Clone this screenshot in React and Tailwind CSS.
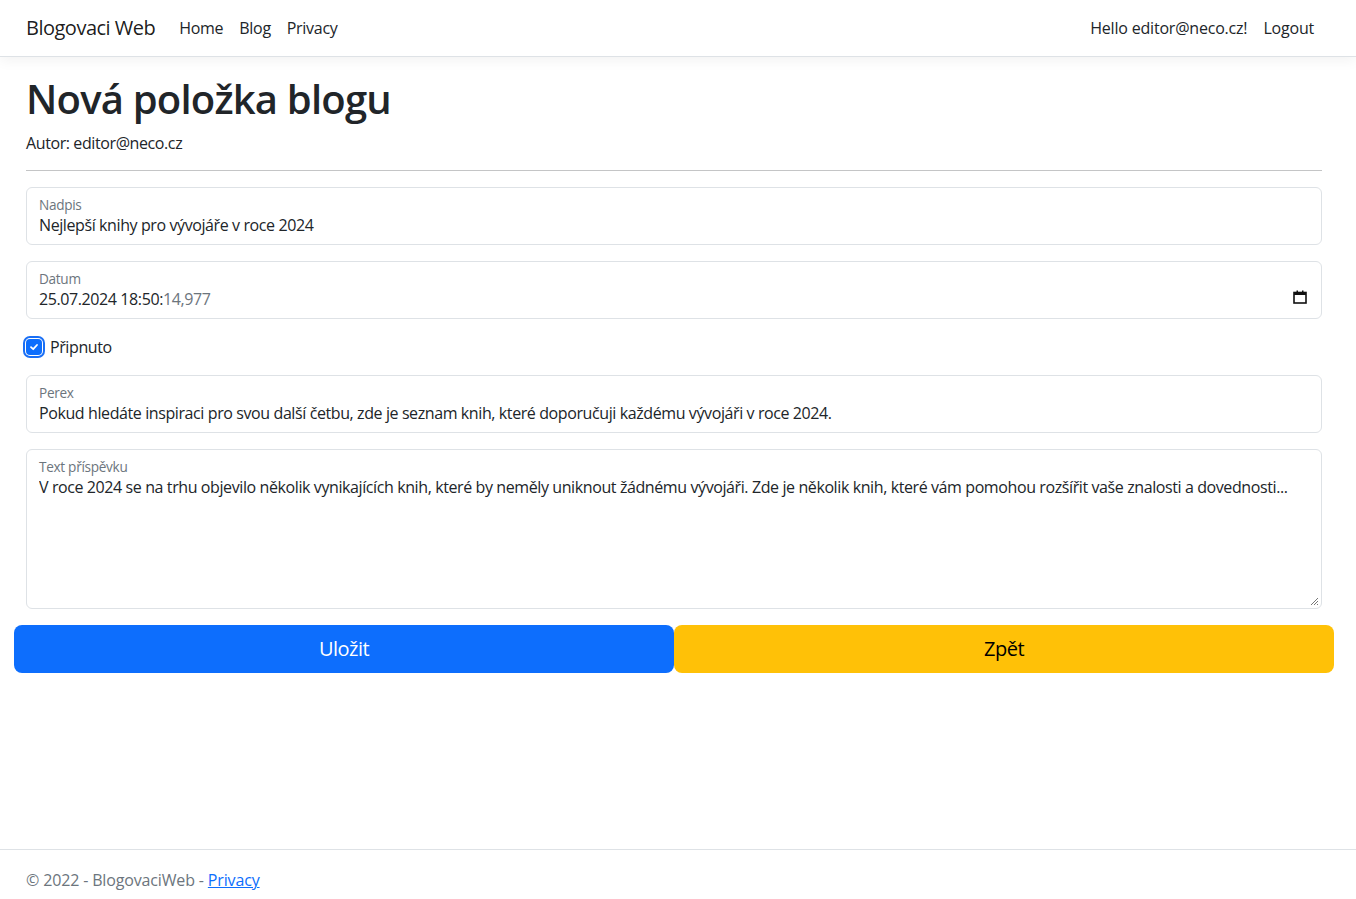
import React from 'react';

const font = { fontFamily: '"Segoe UI", "Open Sans", "Liberation Sans", sans-serif' };

const FloatingField = ({ label, children, tall }) => (
  <div className={`mb-4 rounded-md border border-[#dee2e6] bg-white px-3 ${tall ? 'relative h-[160px]' : 'h-[58px]'}`}>
    <div className="pt-[9px] text-[13.6px] leading-[16px] tracking-[-0.3px] text-[#6c757d]">{label}</div>
    <div className="overflow-hidden whitespace-nowrap text-base leading-6 text-[#212529]">{children}</div>
    {tall && (
      <svg className="absolute right-[2px] bottom-[2px]" width="9" height="9" viewBox="0 0 9 9">
        <path d="M8 1 L1 8 M8 4 L4 8 M8 7 L7 8" stroke="#777" strokeWidth="1" />
      </svg>
    )}
  </div>
);

const App = () => {
  return (
    <div className="flex min-h-[910px] flex-col bg-white tracking-[-0.4px] text-[#212529]" style={font}>
      {/* Navbar */}
      <header className="mb-4 border-b border-[#dee2e6] bg-white shadow-[0_4px_12px_rgba(0,0,0,0.05)]">
        <nav className="flex h-14 items-center pl-[26px] pr-[34px]">
          <a className="mr-4 text-xl leading-[30px] tracking-[-0.5px] text-black/90">Blogovaci Web</a>
          <ul className="flex tracking-[-0.3px]">
            {['Home', 'Blog', 'Privacy'].map((l) => (
              <li key={l} className="px-2 text-base leading-6 text-[#212529]">{l}</li>
            ))}
          </ul>
          <ul className="ml-auto flex tracking-[-0.2px]">
            <li className="px-2 text-base leading-6 text-[#212529]">Hello editor@neco.cz!</li>
            <li className="px-2 text-base leading-6 text-[#212529]">Logout</li>
          </ul>
        </nav>
      </header>

      {/* Main */}
      <main className="pl-[26px] pr-[34px] pt-[2px] pb-4">
        <h1 className="mb-2 text-[40px] font-semibold leading-[48px] tracking-[-0.8px]">Nová položka blogu</h1>
        <p className="text-base leading-6">Autor: editor@neco.cz</p>
        <hr className="mt-[15px] mb-4 border-t border-[#c4c5c6]" />

        <FloatingField label="Nadpis">Nejlepší knihy pro vývojáře v roce 2024</FloatingField>
        <div className="relative">
          <FloatingField label="Datum">
            25.07.2024 18:50:<span className="text-[#6c757d]">14,977</span>
          </FloatingField>
          <svg className="absolute right-[15px] top-[29px]" width="14" height="14" viewBox="0 0 14 14">
            <rect x="1" y="2.5" width="12" height="10.5" fill="none" stroke="#111" strokeWidth="1.6" />
            <rect x="1" y="2" width="12" height="3" fill="#111" />
            <rect x="3.5" y="0.5" width="1.5" height="2.5" fill="#111" />
            <rect x="9" y="0.5" width="1.5" height="2.5" fill="#111" />
          </svg>
        </div>

        <div className="mb-4 flex h-6 items-center">
          <span className="flex h-4 w-4 items-center justify-center rounded-[4px] bg-[#0d6efd] ring-2 ring-[#1a6ff5] ring-offset-1">
            <svg width="10" height="10" viewBox="0 0 10 10">
              <path d="M2 5.2 L4.2 7.2 L8 3" fill="none" stroke="#fff" strokeWidth="1.8" strokeLinecap="round" strokeLinejoin="round" />
            </svg>
          </span>
          <span className="ml-2 text-base leading-6">Připnuto</span>
        </div>

        <FloatingField label="Perex">
          Pokud hledáte inspiraci pro svou další četbu, zde je seznam knih, které doporučuji každému vývojáři v roce 2024.
        </FloatingField>
        <FloatingField label="Text příspěvku" tall>
          V roce 2024 se na trhu objevilo několik vynikajících knih, které by neměly uniknout žádnému vývojáři. Zde je několik knih, které vám pomohou rozšířit vaše znalosti a dovednosti...
        </FloatingField>

        <div className="-mx-3 flex">
          <button className="h-12 flex-1 rounded-lg bg-[#0d6efd] text-xl tracking-[-0.5px] text-white">Uložit</button>
          <button className="h-12 flex-1 rounded-lg bg-[#ffc107] text-xl tracking-[-0.5px] text-black">Zpět</button>
        </div>
      </main>

      {/* Footer */}
      <footer className="mt-auto border-t border-[#dee2e6] pl-[26px] pr-[34px] leading-[60px] tracking-[-0.15px] text-[#6c757d]">
        © 2022 - BlogovaciWeb - <a className="text-[#0d6efd] underline">Privacy</a>
      </footer>
    </div>
  );
};

export default App;
